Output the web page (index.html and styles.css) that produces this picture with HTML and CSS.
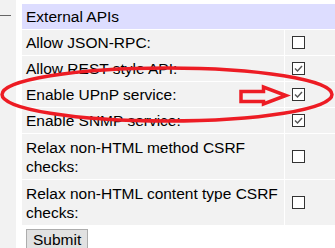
FILE: index.html
```html
<!DOCTYPE html>
<html lang="en">
<head>
  <meta charset="UTF-8">
  <meta name="viewport" content="width=device-width, initial-scale=1.0">
  <title>External APIs</title>
  <link rel="stylesheet" href="styles.css">
</head>
<body>
  <div class="page">
    <aside class="side">
      <div class="dash"></div>
    </aside>
    <main class="content">
      <form class="settings-form">
        <table class="settings">
          <tr><th colspan="2">External APIs</th></tr>
          <tr>
            <td class="label">Allow JSON-RPC:</td>
            <td class="chk"><span class="box"></span></td>
          </tr>
          <tr>
            <td class="label">Allow REST style API:</td>
            <td class="chk"><span class="box checked"><svg viewBox="0 0 11 11"><path d="M2 5.5 L4.5 8 L9 3"/></svg></span></td>
          </tr>
          <tr>
            <td class="label">Enable UPnP service:</td>
            <td class="chk"><span class="box checked"><svg viewBox="0 0 11 11"><path d="M2 5.5 L4.5 8 L9 3"/></svg></span></td>
          </tr>
          <tr>
            <td class="label">Enable SNMP service:</td>
            <td class="chk"><span class="box checked"><svg viewBox="0 0 11 11"><path d="M2 5.5 L4.5 8 L9 3"/></svg></span></td>
          </tr>
          <tr>
            <td class="label wrap">Relax non-HTML method CSRF checks:</td>
            <td class="chk"><span class="box"></span></td>
          </tr>
          <tr>
            <td class="label wrap">Relax non-HTML content type CSRF checks:</td>
            <td class="chk"><span class="box"></span></td>
          </tr>
        </table>
        <button type="button" class="submit">Submit</button>
      </form>
    </main>
  </div>

  <!-- hand drawn highlight over the UPnP row -->
  <svg class="marks" width="335" height="248" viewBox="0 0 335 248">
    <ellipse cx="167" cy="94.5" rx="165" ry="26.5"/>
    <path d="M241 91.5 H263.5 V87 L286 95.5 L263.5 104 V101.5 H241 Z"/>
  </svg>
</body>
</html>
```

FILE: styles.css
```css
* { box-sizing: border-box; }
html, body {
  height: 100%;
}
body {
  margin: 0;
  font-family: "Liberation Sans", Arial, sans-serif;
  font-size: 15.5px;
  color: #000;
  background: #fff;
  overflow: hidden;
  position: relative;
}
.page {
  display: flex;
  height: 100%;
}
.side {
  flex: none;
  width: 16px;
  background: #f2f2f2;
  padding-top: 15px;
}
.dash {
  width: 11px;
  height: 1px;
  background: #666;
}
.content {
  flex: none;
  padding: 3px 0 0 5px;
}
.settings {
  border-spacing: 1px;
  width: 334px;
}
.settings th {
  background: #ddddff;
  font-weight: normal;
  text-align: left;
  padding: 3px 4px;
  line-height: 19px;
}
.settings td {
  background: #f2f2f2;
  padding: 3px 4px;
  line-height: 19px;
  vertical-align: middle;
}
.settings td.label {
  width: 262px;
}
.settings td.wrap {
  padding-top: 4px;
}
.settings td.chk {
  padding-left: 7px;
}
.box {
  display: block;
  width: 13px;
  height: 13px;
  border: 1px solid #333;
  background: #fff;
}
.box svg {
  display: block;
  width: 11px;
  height: 11px;
  fill: none;
  stroke: #555;
  stroke-width: 1.4;
}
.submit {
  display: block;
  margin: 3px 0 0 5px;
  font-family: "Liberation Sans", Arial, sans-serif;
  font-size: 15.5px;
  padding: 1px 6px;
  background: #e1e1e1;
  border: 1px solid #adadad;
  border-radius: 0;
  color: #000;
}
.marks {
  position: absolute;
  left: 0;
  top: 0;
  fill: none;
  stroke: #ed1c24;
  stroke-width: 3.5;
}
```
